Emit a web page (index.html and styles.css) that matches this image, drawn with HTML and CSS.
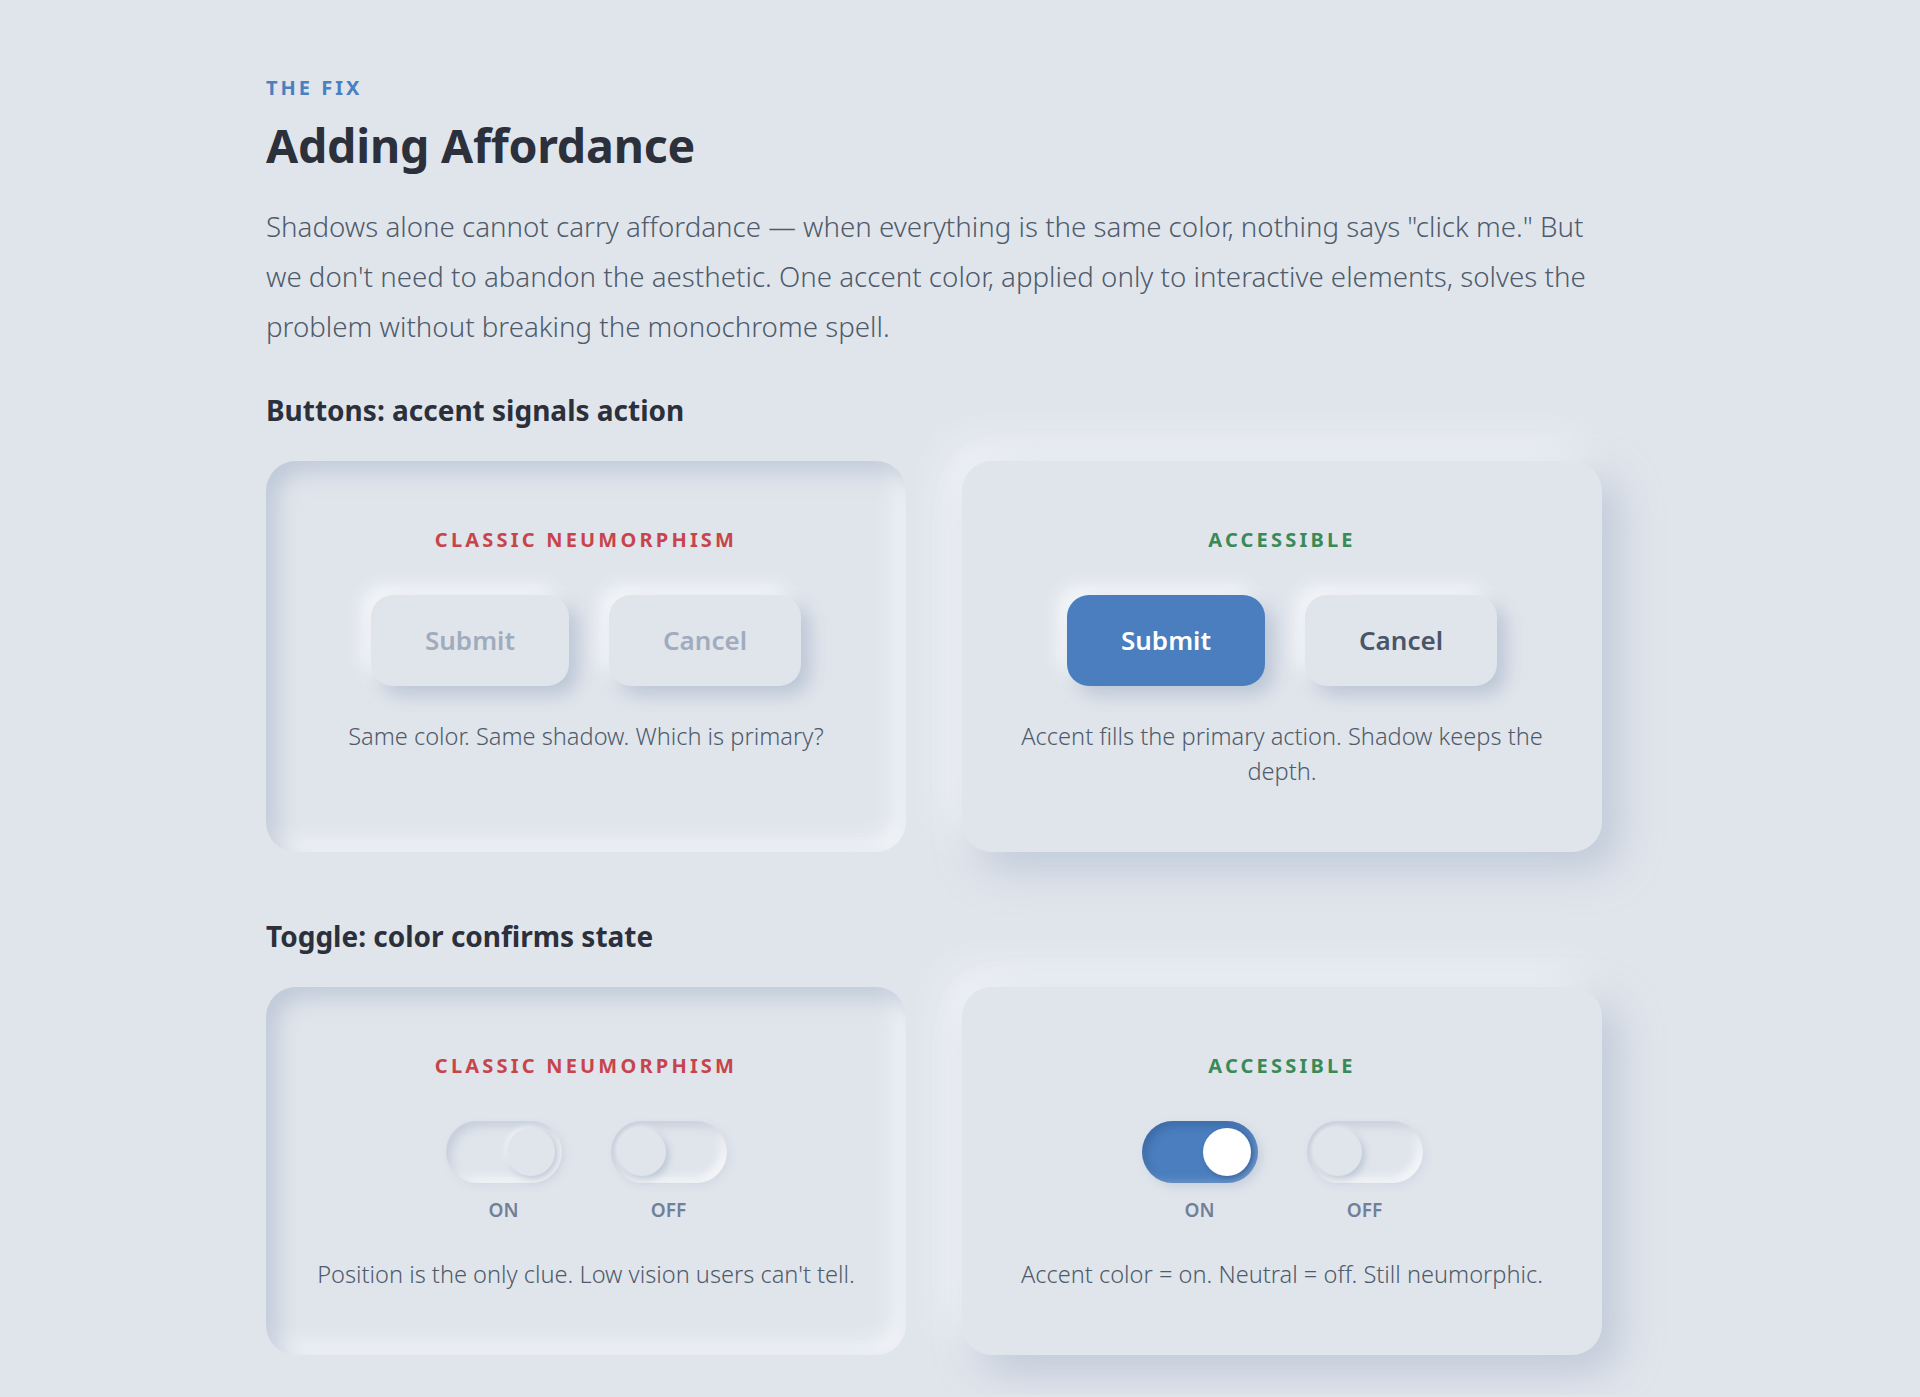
FILE: index.html
```html
<!DOCTYPE html>
<html lang="en">
<head>
<meta charset="utf-8">
<title>Adding Affordance</title>
<link rel="stylesheet" href="styles.css">
</head>
<body>
<main class="page">
  <div class="eyebrow">THE FIX</div>
  <h1 class="title">Adding Affordance</h1>
  <p class="lead">Shadows alone cannot carry affordance — when everything is the same color, nothing says "click me." But we don't need to abandon the aesthetic. One accent color, applied only to interactive elements, solves the problem without breaking the monochrome spell.</p>

  <section class="section">
    <h2 class="section-title">Buttons: accent signals action</h2>
    <div class="compare">
      <div class="card card-inset">
        <div class="card-label label-bad">CLASSIC NEUMORPHISM</div>
        <div class="btn-row">
          <span class="btn btn-muted">Submit</span>
          <span class="btn btn-muted">Cancel</span>
        </div>
        <p class="caption">Same color. Same shadow. Which is primary?</p>
      </div>
      <div class="card card-raised">
        <div class="card-label label-good">ACCESSIBLE</div>
        <div class="btn-row">
          <span class="btn btn-primary">Submit</span>
          <span class="btn btn-neutral">Cancel</span>
        </div>
        <p class="caption">Accent fills the primary action. Shadow keeps the depth.</p>
      </div>
    </div>
  </section>

  <section class="section">
    <h2 class="section-title">Toggle: color confirms state</h2>
    <div class="compare">
      <div class="card card-inset">
        <div class="card-label label-bad">CLASSIC NEUMORPHISM</div>
        <div class="toggle-row">
          <div class="toggle-item">
            <span class="toggle is-on"><span class="knob"></span></span>
            <span class="toggle-text">ON</span>
          </div>
          <div class="toggle-item">
            <span class="toggle"><span class="knob"></span></span>
            <span class="toggle-text">OFF</span>
          </div>
        </div>
        <p class="caption">Position is the only clue. Low vision users can't tell.</p>
      </div>
      <div class="card card-raised">
        <div class="card-label label-good">ACCESSIBLE</div>
        <div class="toggle-row">
          <div class="toggle-item">
            <span class="toggle is-on toggle-accent"><span class="knob"></span></span>
            <span class="toggle-text">ON</span>
          </div>
          <div class="toggle-item">
            <span class="toggle"><span class="knob"></span></span>
            <span class="toggle-text">OFF</span>
          </div>
        </div>
        <p class="caption">Accent color = on. Neutral = off. Still neumorphic.</p>
      </div>
    </div>
  </section>
</main>
</body>
</html>
```

FILE: styles.css
```css
* { box-sizing: border-box; }

html, body {
  margin: 0;
  background: #e0e5ec;
}

body {
  font-family: "Noto Sans", "Open Sans", sans-serif;
  color: #2b303b;
}

.page {
  max-width: 1388px;
  margin: 0 auto;
  padding: 75px 0 40px;
}

.eyebrow {
  font-size: 20px;
  line-height: 26px;
  font-weight: 700;
  letter-spacing: 0.15em;
  color: #4a7fc0;
  margin-bottom: 16px;
}

.title {
  margin: 0;
  font-size: 46.5px;
  line-height: 56px;
  font-weight: 700;
  color: #2b303b;
  letter-spacing: -0.005em;
}

.lead {
  max-width: 1336px;
  margin: 28px 0 0;
  font-size: 27.7px;
  font-weight: 300;
  line-height: 50px;
  color: #4f5b6b;
}

.section { margin-top: 41px; }
.section + .section { margin-top: 66px; }

.section-title {
  margin: 0 0 33px;
  font-size: 28px;
  line-height: 36px;
  font-weight: 700;
  color: #2b303b;
}

.compare {
  max-width: 1336px;
  display: grid;
  grid-template-columns: 1fr 1fr;
  gap: 56px;
}

.card {
  border-radius: 30px;
  background: #e0e5ec;
  padding: 65px 48px 63px;
  display: flex;
  flex-direction: column;
  align-items: center;
  text-align: center;
}

.card-inset {
  box-shadow: inset 10px 10px 22px rgba(163, 177, 198, 0.55),
              inset -10px -10px 22px rgba(255, 255, 255, 0.65);
}

.card-raised {
  box-shadow: 16px 16px 40px rgba(163, 177, 198, 0.55),
              -16px -16px 40px rgba(255, 255, 255, 0.6);
}

.card-label {
  font-size: 20px;
  line-height: 28px;
  font-weight: 700;
  letter-spacing: 0.16em;
  margin-bottom: 41px;
}

.label-bad { color: #c8444b; }
.label-good { color: #3a8a57; }

.btn-row {
  display: flex;
  gap: 40px;
  justify-content: center;
}

.btn {
  display: inline-block;
  font-size: 26px;
  line-height: 37px;
  font-weight: 600;
  padding: 27px 54px;
  border-radius: 22px;
  background: #e0e5ec;
  box-shadow: 9px 9px 18px rgba(163, 177, 198, 0.6),
              -9px -9px 18px rgba(255, 255, 255, 0.7);
}

.btn-muted { color: #a0acbd; }
.btn-neutral { color: #4a5568; }
.btn-primary {
  background: #4a7ebe;
  color: #ffffff;
}

.caption {
  margin: 33px 0 0;
  font-size: 23.6px;
  font-weight: 300;
  line-height: 35px;
  color: #4f5b6b;
}

.toggle-row {
  display: flex;
  gap: 49px;
  justify-content: center;
  margin-bottom: 1px;
}

.toggle-item {
  display: flex;
  flex-direction: column;
  align-items: center;
  gap: 14px;
}

.toggle {
  display: flex;
  align-items: center;
  width: 116px;
  height: 62px;
  padding: 7px;
  border-radius: 31px;
  background: #e0e5ec;
  box-shadow: inset 5px 5px 10px rgba(163, 177, 198, 0.45),
              inset -5px -5px 10px rgba(255, 255, 255, 0.7),
              3px 3px 8px rgba(163, 177, 198, 0.2);
}

.toggle.is-on { justify-content: flex-end; }

.knob {
  width: 48px;
  height: 48px;
  border-radius: 50%;
  background: #e0e5ec;
  box-shadow: 3px 3px 7px rgba(163, 177, 198, 0.6),
              -2px -2px 5px rgba(255, 255, 255, 0.6);
}

.toggle-accent {
  background: #4a7ebe;
  box-shadow: inset 4px 4px 8px rgba(30, 60, 110, 0.3),
              inset -3px -3px 6px rgba(255, 255, 255, 0.2),
              4px 4px 10px rgba(163, 177, 198, 0.4);
}

.toggle-accent .knob {
  background: #ffffff;
  box-shadow: 2px 2px 5px rgba(20, 40, 80, 0.3);
}

.toggle-text {
  font-size: 19px;
  line-height: 26px;
  font-weight: 600;
  color: #718096;
}
```
